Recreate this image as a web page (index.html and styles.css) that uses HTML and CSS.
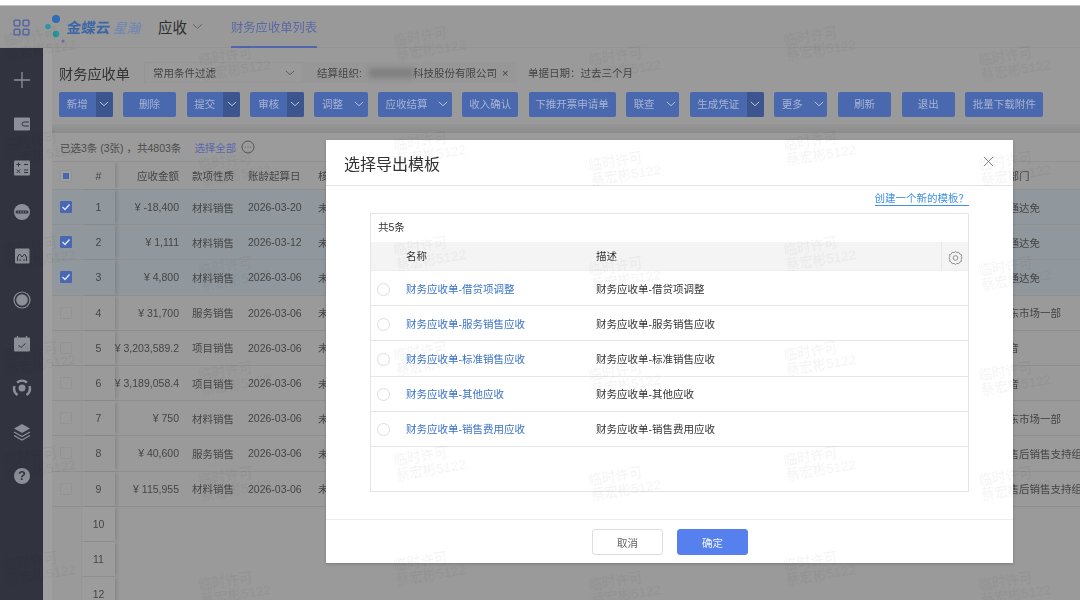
FILE: index.html
```html
<!DOCTYPE html>
<html lang="zh">
<head>
<meta charset="utf-8">
<title>财务应收单列表</title>
<link rel="stylesheet" href="styles.css">
</head>
<body>
<div class="page">
  <div class="strip"></div>
  <header class="topbar">
    <svg class="apps" viewBox="0 0 16 16"><rect x="1" y="1" width="5.5" height="5.5" rx="1"/><rect x="9.5" y="1" width="5.5" height="5.5" rx="1"/><rect x="1" y="9.5" width="5.5" height="5.5" rx="1"/><rect x="9.5" y="9.5" width="5.5" height="5.5" rx="1"/></svg>
    <svg class="logo-mark" viewBox="0 0 22 30"><circle cx="11" cy="5" r="4" fill="#2f6cb5"/><circle cx="3" cy="12.5" r="2.8" fill="#2b9aa6"/><circle cx="11" cy="20" r="3.2" fill="#23959c"/><circle cx="18" cy="27" r="1.6" fill="#7d62a8"/></svg>
    <span class="logo-a">金蝶云</span><span class="logo-b">星瀚</span>
    <span class="app-name">应收</span>
    <svg class="app-caret" viewBox="0 0 12 7"><path d="M1 1l5 4.5L11 1"/></svg>
    <span class="tab">财务应收单列表</span>
  </header>
  <div class="body">
    <nav class="side">
      <svg class="si" viewBox="0 0 20 20"><path d="M10 2v16M2 10h16" class="line"/></svg>
      <svg class="si" viewBox="0 0 20 20"><rect x="2" y="3.5" width="16" height="13" rx="1" class="fill"/><path d="M17 8h-5a2 2 0 000 4h5" class="cut"/></svg>
      <svg class="si" viewBox="0 0 20 20"><rect x="2" y="2.5" width="16" height="15" rx="1" class="fill"/><path d="M4.5 6.5h4M6.5 4.5v4M12 6.5h4M4.8 11.5l3.4 3.4M8.2 11.5l-3.4 3.4M12 12h4M12 14.5h4" class="cut"/></svg>
      <svg class="si" viewBox="0 0 20 20"><circle cx="10" cy="10" r="8" class="fill"/><rect x="3.5" y="8.5" width="13" height="3" rx="1.5" fill="#31343f"/><path d="M5.5 10h9" class="dots"/></svg>
      <svg class="si" viewBox="0 0 20 20"><rect x="3" y="2.5" width="14.5" height="15" rx="1" class="fill"/><path d="M5.5 15v-4l2-3 2.500 3 2.500-3 2 3v4M8 15v-2M12 15v-2" class="cut"/></svg>
      <svg class="si" viewBox="0 0 20 20"><circle cx="10" cy="10" r="8" class="ring"/><circle cx="10" cy="10" r="5.800" class="fill"/></svg>
      <svg class="si" viewBox="0 0 20 20"><rect x="2" y="3.500" width="16" height="14" rx="1" class="fill"/><path d="M5.500 2v3M14.500 2v3" class="line"/><path d="M6.500 11l2.500 2.500 4.500-4" class="cut"/></svg>
      <svg class="si" viewBox="0 0 20 20"><path d="M5 4.500A8 8 0 0115 4.500M17.500 8a8 8 0 01-3 9M2.500 8a8 8 0 003 9" class="ring2"/><circle cx="10" cy="10" r="3.500" class="fill"/></svg>
      <svg class="si" viewBox="0 0 20 20"><path d="M10 2l8 4.500-8 4.500-8-4.500z" class="fill"/><path d="M2 10l8 4.500 8-4.500M2 13.500l8 4.500 8-4.500" class="line"/></svg>
      <svg class="si" viewBox="0 0 20 20"><circle cx="10" cy="10" r="8" class="fill"/><text x="10" y="14" class="q">?</text></svg>
    </nav>
    <div class="gutter"></div>
    <main class="main">
      <div class="titlebar">
        <h1 class="title">财务应收单</h1>
        <div class="select"><span>常用条件过滤</span><svg class="mini" viewBox="0 0 12 7"><path d="M1 1l5 4.500L11 1"/></svg></div>
        <div class="filter"><span>结算组织:</span><i class="smear"></i><span>科技股份有限公司</span><b class="x">×</b></div>
        <div class="filter-2">单据日期：过去三个月</div>
      </div>
      <div class="toolbar">
        <button class="btn w53 split"><span>新增</span><i><svg viewBox="0 0 12 7"><path d="M1 1l5 4.500L11 1"/></svg></i></button>
        <button class="btn w53">删除</button>
        <button class="btn w53 split"><span>提交</span><i><svg viewBox="0 0 12 7"><path d="M1 1l5 4.500L11 1"/></svg></i></button>
        <button class="btn w53 split"><span>审核</span><i><svg viewBox="0 0 12 7"><path d="M1 1l5 4.500L11 1"/></svg></i></button>
        <button class="btn w53 drop"><span>调整</span><i><svg viewBox="0 0 12 7"><path d="M1 1l5 4.500L11 1"/></svg></i></button>
        <button class="btn w74 drop"><span>应收结算</span><i><svg viewBox="0 0 12 7"><path d="M1 1l5 4.500L11 1"/></svg></i></button>
        <button class="btn w56">收入确认</button>
        <button class="btn w87">下推开票申请单</button>
        <button class="btn w53 drop"><span>联查</span><i><svg viewBox="0 0 12 7"><path d="M1 1l5 4.500L11 1"/></svg></i></button>
        <button class="btn w74 split"><span>生成凭证</span><i><svg viewBox="0 0 12 7"><path d="M1 1l5 4.500L11 1"/></svg></i></button>
        <button class="btn w53 drop"><span>更多</span><i><svg viewBox="0 0 12 7"><path d="M1 1l5 4.500L11 1"/></svg></i></button>
        <button class="btn w53">刷新</button>
        <button class="btn w53">退出</button>
        <button class="btn w78">批量下载附件</button>
      </div>
      <div class="band"></div>
      <div class="summary">
        <span>已选3条 (3张) ，共4803条</span><a class="all">选择全部</a>
        <svg class="more" viewBox="0 0 14 14"><circle cx="7" cy="7" r="6"/><path d="M4 7h.8M6.600 7h.8M9.200 7h.8"/></svg>
      </div>
      <div class="table">
        <div class="row head">
          <div class="c-check"><span class="cb mixed"></span></div><div class="c-num">#</div>
          <div class="c-amt">应收金额</div><div class="c-type">款项性质</div><div class="c-date">账龄起算日</div><div class="c-st">核销状态</div><div class="c-dept">主部门</div>
        </div>
        <div class="row sel">
          <div class="c-check"><span class="cb on"><svg viewBox="0 0 12 12"><path d="M2.500 6l2.500 2.500 4.500-5"/></svg></span></div><div class="c-num">1</div>
          <div class="c-amt">¥ -18,400</div><div class="c-type">材料销售</div><div class="c-date">2026-03-20</div><div class="c-st">未核销</div><div class="c-dept">张通达免</div>
        </div>
        <div class="row sel">
          <div class="c-check"><span class="cb on"><svg viewBox="0 0 12 12"><path d="M2.500 6l2.500 2.500 4.500-5"/></svg></span></div><div class="c-num">2</div>
          <div class="c-amt">¥ 1,111</div><div class="c-type">材料销售</div><div class="c-date">2026-03-12</div><div class="c-st">未核销</div><div class="c-dept">张通达免</div>
        </div>
        <div class="row sel">
          <div class="c-check"><span class="cb on"><svg viewBox="0 0 12 12"><path d="M2.500 6l2.500 2.500 4.500-5"/></svg></span></div><div class="c-num">3</div>
          <div class="c-amt">¥ 4,800</div><div class="c-type">材料销售</div><div class="c-date">2026-03-06</div><div class="c-st">未核销</div><div class="c-dept">张通达免</div>
        </div>
        <div class="row">
          <div class="c-check"><span class="cb"></span></div><div class="c-num">4</div>
          <div class="c-amt">¥ 31,700</div><div class="c-type">服务销售</div><div class="c-date">2026-03-06</div><div class="c-st">未核销</div><div class="c-dept">华东市场一部</div>
        </div>
        <div class="row">
          <div class="c-check"><span class="cb"></span></div><div class="c-num">5</div>
          <div class="c-amt">¥ 3,203,589.2</div><div class="c-type">项目销售</div><div class="c-date">2026-03-06</div><div class="c-st">未核销</div><div class="c-dept">抖音</div>
        </div>
        <div class="row">
          <div class="c-check"><span class="cb"></span></div><div class="c-num">6</div>
          <div class="c-amt">¥ 3,189,058.4</div><div class="c-type">项目销售</div><div class="c-date">2026-03-06</div><div class="c-st">未核销</div><div class="c-dept">抖音</div>
        </div>
        <div class="row">
          <div class="c-check"><span class="cb"></span></div><div class="c-num">7</div>
          <div class="c-amt">¥ 750</div><div class="c-type">材料销售</div><div class="c-date">2026-03-06</div><div class="c-st">未核销</div><div class="c-dept">华东市场一部</div>
        </div>
        <div class="row">
          <div class="c-check"><span class="cb"></span></div><div class="c-num">8</div>
          <div class="c-amt">¥ 40,600</div><div class="c-type">服务销售</div><div class="c-date">2026-03-06</div><div class="c-st">未核销</div><div class="c-dept">总售后销售支持组</div>
        </div>
        <div class="row">
          <div class="c-check"><span class="cb"></span></div><div class="c-num">9</div>
          <div class="c-amt">¥ 115,955</div><div class="c-type">材料销售</div><div class="c-date">2026-03-06</div><div class="c-st">未核销</div><div class="c-dept">总售后销售支持组</div>
        </div>
        <div class="row empty"><div class="c-check"></div><div class="c-num">10</div></div>
        <div class="row empty"><div class="c-check"></div><div class="c-num">11</div></div>
        <div class="row empty"><div class="c-check"></div><div class="c-num">12</div></div>
      </div>
    </main>
  </div>

  <section class="modal">
    <div class="m-head">
      <h2 class="m-title">选择导出模板</h2>
      <svg class="m-close" viewBox="0 0 12 12"><path d="M1 1l10 10M11 1L1 11"/></svg>
    </div>
    <div class="m-body">
      <div class="m-linkrow"><a class="m-link">创建一个新的模板？</a></div>
      <div class="m-table">
        <div class="m-count">共5条</div>
        <div class="m-row m-th">
          <div class="m-radio"></div><div class="m-name">名称</div><div class="m-desc">描述</div>
          <div class="m-gear"><svg viewBox="0 0 16 16"><path d="M8 1.500l1.500 1.300 2-.3 1 1.700 1.900.8-.3 2L15 8.500l-1 1.600.3 2-1.900.8-1 1.700-2-.3L8 15.500l-1.500-1.200-2 .3-1-1.700-1.800-.8.300-2L1 8.500l1-1.500-.3-2 1.800-.8 1-1.700 2 .3z"/><circle cx="8" cy="8.500" r="2.500"/></svg></div>
        </div>
        <div class="m-row"><div class="m-radio"><span class="radio"></span></div><div class="m-name link">财务应收单-借贷项调整</div><div class="m-desc">财务应收单-借贷项调整</div></div>
        <div class="m-row"><div class="m-radio"><span class="radio"></span></div><div class="m-name link">财务应收单-服务销售应收</div><div class="m-desc">财务应收单-服务销售应收</div></div>
        <div class="m-row"><div class="m-radio"><span class="radio"></span></div><div class="m-name link">财务应收单-标准销售应收</div><div class="m-desc">财务应收单-标准销售应收</div></div>
        <div class="m-row"><div class="m-radio"><span class="radio"></span></div><div class="m-name link">财务应收单-其他应收</div><div class="m-desc">财务应收单-其他应收</div></div>
        <div class="m-row"><div class="m-radio"><span class="radio"></span></div><div class="m-name link">财务应收单-销售费用应收</div><div class="m-desc">财务应收单-销售费用应收</div></div>
      </div>
    </div>
    <div class="m-foot">
      <button class="m-btn">取消</button>
      <button class="m-btn primary">确定</button>
    </div>
  </section>

  <div class="marks">
    <div class="mark-col"><div class="wm">临时许可<br>蔡宏彬5122</div><div class="wm">临时许可<br>蔡宏彬5122</div><div class="wm">临时许可<br>蔡宏彬5122</div><div class="wm">临时许可<br>蔡宏彬5122</div><div class="wm">临时许可<br>蔡宏彬5122</div><div class="wm">临时许可<br>蔡宏彬5122</div></div>
    <div class="mark-col low"><div class="wm">临时许可<br>蔡宏彬5122</div><div class="wm">临时许可<br>蔡宏彬5122</div><div class="wm">临时许可<br>蔡宏彬5122</div><div class="wm">临时许可<br>蔡宏彬5122</div><div class="wm">临时许可<br>蔡宏彬5122</div><div class="wm">临时许可<br>蔡宏彬5122</div></div>
    <div class="mark-col"><div class="wm">临时许可<br>蔡宏彬5122</div><div class="wm">临时许可<br>蔡宏彬5122</div><div class="wm">临时许可<br>蔡宏彬5122</div><div class="wm">临时许可<br>蔡宏彬5122</div><div class="wm">临时许可<br>蔡宏彬5122</div><div class="wm">临时许可<br>蔡宏彬5122</div></div>
    <div class="mark-col low"><div class="wm">临时许可<br>蔡宏彬5122</div><div class="wm">临时许可<br>蔡宏彬5122</div><div class="wm">临时许可<br>蔡宏彬5122</div><div class="wm">临时许可<br>蔡宏彬5122</div><div class="wm">临时许可<br>蔡宏彬5122</div><div class="wm">临时许可<br>蔡宏彬5122</div></div>
    <div class="mark-col"><div class="wm">临时许可<br>蔡宏彬5122</div><div class="wm">临时许可<br>蔡宏彬5122</div><div class="wm">临时许可<br>蔡宏彬5122</div><div class="wm">临时许可<br>蔡宏彬5122</div><div class="wm">临时许可<br>蔡宏彬5122</div><div class="wm">临时许可<br>蔡宏彬5122</div></div>
    <div class="mark-col low"><div class="wm">临时许可<br>蔡宏彬5122</div><div class="wm">临时许可<br>蔡宏彬5122</div><div class="wm">临时许可<br>蔡宏彬5122</div><div class="wm">临时许可<br>蔡宏彬5122</div><div class="wm">临时许可<br>蔡宏彬5122</div><div class="wm">临时许可<br>蔡宏彬5122</div></div>
  </div>
</div>
</body>
</html>
```

FILE: styles.css
```css
* { box-sizing: border-box; }
html, body { margin: 0; padding: 0; width: 1080px; height: 600px; overflow: hidden; }
body { font-family: "Liberation Sans", "Noto Sans CJK SC", sans-serif; font-size: 10.5px; color: #454545; background: #9a9a9a; }
.page { position: relative; width: 1080px; height: 600px; overflow: hidden; filter: blur(0.35px); }

.strip { height: 6px; background: #fff; border-bottom: 1px solid #c4c4c4; }

.topbar { height: 42px; display: flex; align-items: center; background: #999; border-bottom: 1px solid #929292; }
.apps { width: 17px; height: 17px; margin-left: 13px; margin-top: 1px; fill: none; stroke: #4a5fa6; stroke-width: 1.2; }
.logo-mark { width: 22px; height: 30px; margin-left: 14.500px; margin-top: 4px; }
.logo-a { font-size: 14.5px; font-weight: 700; color: #3a67a8; display: inline-block; transform: skewX(-6deg); }
.logo-b { margin-left: 3px; font-size: 13.500px; font-style: italic; color: #6a86b6; }
.app-name { margin-left: 18px; font-size: 14.500px; color: #2e2e2e; }
.app-caret { width: 11px; height: 7px; margin-left: 5px; fill: none; stroke: #606060; stroke-width: 1; }
.tab { height: 42px; margin-left: 28px; padding-top: 2px; display: flex; align-items: center; font-size: 12.300px; color: #5a68a6; border-bottom: 2px solid #5166ae; }

.body { display: flex; height: 552px; }
.side { width: 43px; flex: none; background: #31343f; display: flex; flex-direction: column; align-items: center; padding-top: 22px; gap: 24px; }
.si { width: 20px; height: 20px; flex: none; }
.si .line { fill: none; stroke: #8c8f97; stroke-width: 1.300; }
.si .fill { fill: #8c8f97; }
.si .cut { fill: none; stroke: #31343f; stroke-width: 1; }
.si .dots { stroke: #8c8f97; stroke-width: 1.200; stroke-dasharray: 1.500 1; }
.si .ring { fill: none; stroke: #8c8f97; stroke-width: 1.200; }
.si .ring2 { fill: none; stroke: #8c8f97; stroke-width: 2.400; }
.si .q { fill: #31343f; font-size: 13px; font-weight: 700; text-anchor: middle; font-family: "Liberation Sans", sans-serif; }

.gutter { width: 9px; flex: none; background: #a0a0a0; }
.main { flex: 1; min-width: 0; display: flex; flex-direction: column; }

.titlebar { height: 35px; flex: none; padding: 14px 0 0 7px; display: flex; align-items: center; }
.title { margin: 0; font-size: 14.200px; font-weight: 400; color: #333; width: 71px; }
.select { margin-left: 14px; width: 159px; height: 21px; padding: 0 7px 0 8px; display: flex; align-items: center; justify-content: space-between; border: 1px solid #959595; color: #444; }
.mini { width: 10px; height: 6px; fill: none; stroke: #4f4f4f; stroke-width: 1; }
.filter { width: 214px; height: 21px; padding-left: 14px; display: flex; align-items: center; background: #979797; color: #444; }
.smear { width: 44px; height: 10px; margin-left: 7px; background: #808080; filter: blur(2.500px); }
.x { margin-left: 5px; font-weight: 400; font-size: 11px; }
.filter-2 { margin-left: 11px; color: #444; }

.toolbar { margin-top: 9px; padding-left: 7px; display: flex; gap: 10.300px; height: 24.500px; flex: none; }
.btn { height: 24.500px; padding: 0; border: 0; border-radius: 2px; background: #4a68ae; color: #a5b4d6; font: inherit; display: flex; align-items: stretch; justify-content: center; line-height: 24.500px; overflow: hidden; flex: none; }
.btn span { flex: 1; text-align: center; }
.btn i { width: 17px; display: flex; align-items: center; justify-content: center; }
.btn i svg { width: 10px; height: 6px; fill: none; stroke: #b4c0dc; stroke-width: 1.200; }
.btn.split i { background: #3d558f; }
.w53 { width: 53.500px; }
.w74 { width: 74px; }
.w56 { width: 56px; }
.w87 { width: 87px; }
.w78 { width: 78px; }

.band { height: 9px; margin-top: 7.500px; flex: none; background: linear-gradient(#969696, #8c8c8c); }
.summary { height: 29px; flex: none; padding-left: 8px; display: flex; align-items: center; border-bottom: 1px solid #919191; color: #4c4c4c; background: #9b9b9b; }
.all { margin-left: 13px; color: #5a67ad; }
.more { width: 14px; height: 14px; margin-left: 5px; fill: none; stroke: #555; stroke-width: 1; }

.table { flex: 1; overflow: hidden; }
.row { height: 35.200px; display: flex; align-items: stretch; border-bottom: 1px solid #8f8f8f; white-space: nowrap; }
.row > div { display: flex; align-items: center; }
.head { height: 28px; }
.sel { background: #90979d; }
.c-check { width: 29px; flex: none; justify-content: flex-start; padding-left: 8px; }
.c-num { width: 34px; flex: none; justify-content: center; box-shadow: 3px 0 3px -1px rgba(0, 0, 0, .12); border-left: 1px solid #969696; }
.sel .c-num, .head .c-num { border-left-color: transparent; }
.c-amt { width: 70px; flex: none; justify-content: flex-end; padding-right: 6px; white-space: pre; }
.c-type { width: 56px; flex: none; padding-left: 7px; }
.c-date { width: 70px; flex: none; padding-left: 7px; }
.c-st { flex: 1; min-width: 0; padding-left: 7px; }
.c-dept { width: 82px; flex: none; overflow: hidden; }
.cb { width: 12px; height: 12px; display: flex; align-items: center; justify-content: center; border: 1px solid #939393; border-radius: 1px; }
.cb.on { background: #4a67b3; border-color: #4a67b3; }
.cb.on svg { width: 12px; height: 12px; flex: none; fill: none; stroke: #dfe5f2; stroke-width: 1.400; }
.cb.mixed { background: #a0a0a0; }
.cb.mixed::after { content: ""; width: 6px; height: 6px; background: #4a67b3; }
.empty { border-bottom: 0; }
.empty .c-num { border-bottom: 1px solid #919191; background: #9c9c9c; }

.modal { position: absolute; left: 326px; top: 140px; width: 687px; height: 423px; background: #fff; display: flex; flex-direction: column; box-shadow: 0 1px 3px rgba(0, 0, 0, .2); color: #333; }
.m-head { height: 46px; flex: none; padding: 0 19px 0 18px; display: flex; align-items: center; justify-content: space-between; border-bottom: 1px solid #e3e3e3; }
.m-title { margin: 0; font-size: 16px; font-weight: 400; color: #333; }
.m-close { width: 11px; height: 11px; fill: none; stroke: #777; stroke-width: 1; margin-top: -2px; }
.m-body { flex: 1; padding: 0 44px; display: flex; flex-direction: column; }
.m-linkrow { height: 27px; display: flex; justify-content: flex-end; align-items: flex-start; padding-top: 5px; }
.m-link { color: #3d91e8; border-bottom: 1px solid #3d91e8; line-height: 14px; }
.m-table { height: 279px; border: 1px solid #e4e4e4; flex: none; }
.m-count { height: 28px; display: flex; align-items: center; padding: 0 0 3px 7px; }
.m-row { height: 35.200px; display: flex; align-items: center; border-bottom: 1px solid #e6e6e6; }
.m-th { height: 29px; background: #f4f4f4; border-bottom: 1px solid #eee; padding-bottom: 2px; }
.m-th > .m-gear { padding-top: 2px; height: 29px; margin-bottom: -2px; }
.m-radio { width: 35px; flex: none; padding: 2px 0 0 6px; display: flex; }
.radio { width: 13px; height: 13px; border: 1px solid #ddd; border-radius: 50%; }
.m-name { width: 190px; flex: none; }
.m-name.link { color: #3a72c8; }
.m-desc { flex: 1; }
.m-gear { width: 27px; flex: none; display: flex; align-items: center; justify-content: center; border-left: 1px solid #e8e8e8; }
.m-gear svg { width: 15px; height: 15px; fill: none; stroke: #8a8a8a; stroke-width: 1; }
.m-foot { height: 44px; flex: none; border-top: 1px solid #eee; padding: 9px 0 0 266px; display: flex; gap: 14px; align-items: flex-start; }
.m-btn { width: 71px; height: 26px; padding: 0; border: 1px solid #ddd; border-radius: 3px; background: #fff; color: #666; font: inherit; }
.m-btn.primary { background: #5580ee; border-color: #5580ee; color: #f3f6ff; }

.marks { position: absolute; left: 5px; top: 33px; display: flex; gap: 131px; pointer-events: none; }
.mark-col { width: 64px; display: flex; flex-direction: column; }
.mark-col.low { padding-top: 20px; }
.wm { height: 105px; width: 80px; flex: none; font-size: 13.500px; line-height: 15px; color: rgba(0, 0, 0, .05); transform: rotate(-9deg); transform-origin: 0 15px; white-space: nowrap; filter: blur(.4px); }
```
